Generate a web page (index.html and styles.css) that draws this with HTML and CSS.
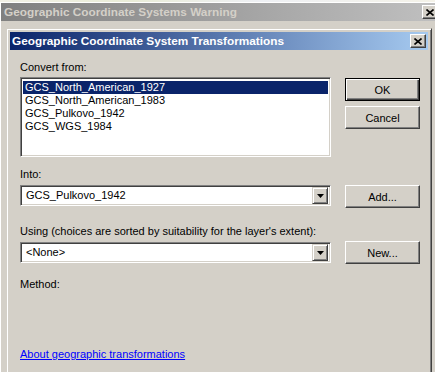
FILE: index.html
```html
<!DOCTYPE html>
<html lang="en">
<head>
    <meta charset="UTF-8">
    <title>Geographic Coordinate System Transformations</title>
    <link rel="stylesheet" href="styles.css">
</head>
<body>
    <div class="desk-strip"></div>

    <!-- Parent window (inactive) -->
    <div class="window">
        <div class="caption caption-inactive">
            <span class="caption-text">Geographic Coordinate Systems Warning</span>
            <button class="close-btn" type="button">
                <svg width="8" height="7" viewBox="0 0 8 7"><path d="M0.5 0.5 L7.5 6.5 M7.5 0.5 L0.5 6.5" stroke="#000" stroke-width="1.6" fill="none"/></svg>
            </button>
        </div>

        <div class="window-body">
            <!-- Transformations dialog -->
            <div class="dialog">
                <div class="caption caption-active">
                    <span class="caption-text">Geographic Coordinate System Transformations</span>
                    <button class="close-btn" type="button">
                        <svg width="8" height="7" viewBox="0 0 8 7"><path d="M0.5 0.5 L7.5 6.5 M7.5 0.5 L0.5 6.5" stroke="#000" stroke-width="1.6" fill="none"/></svg>
                    </button>
                </div>

                <div class="dialog-body">
                    <div class="row">
                        <div class="field">
                            <label class="field-label">Convert from:</label>
                            <div class="listbox">
                                <div class="list-item selected">GCS_North_American_1927</div>
                                <div class="list-item">GCS_North_American_1983</div>
                                <div class="list-item">GCS_Pulkovo_1942</div>
                                <div class="list-item">GCS_WGS_1984</div>
                            </div>
                        </div>
                        <div class="button-col first-col">
                            <button class="btn btn-default" type="button">OK</button>
                            <button class="btn" type="button">Cancel</button>
                        </div>
                    </div>

                    <div class="row row-into">
                        <div class="field">
                            <label class="field-label">Into:</label>
                            <div class="combo">
                                <span class="combo-value">GCS_Pulkovo_1942</span>
                                <span class="combo-arrow">
                                    <svg width="7" height="4" viewBox="0 0 7 4"><polygon points="0,0 7,0 3.5,4" fill="#000"/></svg>
                                </span>
                            </div>
                        </div>
                        <div class="button-col combo-col">
                            <button class="btn" type="button">Add...</button>
                        </div>
                    </div>

                    <div class="row row-using">
                        <div class="field">
                            <label class="field-label">Using (choices are sorted by suitability for the layer's extent):</label>
                            <div class="combo">
                                <span class="combo-value">&lt;None&gt;</span>
                                <span class="combo-arrow">
                                    <svg width="7" height="4" viewBox="0 0 7 4"><polygon points="0,0 7,0 3.5,4" fill="#000"/></svg>
                                </span>
                            </div>
                        </div>
                        <div class="button-col combo-col">
                            <button class="btn" type="button">New...</button>
                        </div>
                    </div>

                    <div class="method-label">Method:</div>

                    <a href="#" class="help-link">About geographic transformations</a>
                </div>
            </div>
        </div>
    </div>
</body>
</html>
```

FILE: styles.css
```css
:root {
    --face: #d4d0c8;
    --shadow: #808080;
    --dark: #404040;
    --highlight: #ffffff;
    --select: #0a246a;
}

* {
    box-sizing: border-box;
    margin: 0;
    padding: 0;
}

body {
    width: 435px;
    height: 372px;
    overflow: hidden;
    background: var(--face);
    font-family: "Liberation Sans", Arial, sans-serif;
    font-size: 11px;
    line-height: 13px;
    color: #000;
}

.desk-strip {
    height: 2px;
    background: linear-gradient(90deg, #f2f1e6, #e9ecd8 30%, #eef0f4 60%, #f4f2e8);
}

.window {
    width: 440px;
    border-top: 1px solid var(--highlight);
    border-left: 1px solid var(--highlight);
}

/* Title bars */
.caption {
    height: 18px;
    display: flex;
    align-items: center;
    justify-content: space-between;
    padding: 0 2px;
}

.caption-inactive {
    background: linear-gradient(90deg, #808080, #c0c0c0);
}

.caption-active {
    background: linear-gradient(90deg, #0a246a, #a6caf0);
}

.caption-text {
    font-weight: bold;
    font-size: 11.8px;
    white-space: nowrap;
}

.caption-inactive .caption-text {
    color: var(--face);
    padding-left: 1px;
}

.caption-active .caption-text {
    color: #fff;
}

.close-btn {
    width: 16px;
    height: 14px;
    background: var(--face);
    border: 1px solid;
    border-color: var(--highlight) var(--dark) var(--dark) var(--highlight);
    box-shadow: inset -1px -1px var(--shadow), inset 1px 1px var(--face);
    display: flex;
    align-items: center;
    justify-content: center;
}

.window-body {
    padding: 7px 0 0 5px;
}

/* Dialog frame */
.dialog {
    width: 426px;
    height: 360px;
    background: var(--face);
    border: 1px solid;
    border-color: var(--face) var(--dark) var(--dark) var(--face);
    padding: 3px;
    box-shadow: inset 1px 1px var(--highlight), inset -1px -1px var(--shadow);
}

.dialog-body {
    padding: 11px 0 0 10px;
}

.row {
    display: flex;
    align-items: flex-start;
    gap: 14px;
}

.field {
    width: 311px;
}

.field-label {
    display: block;
    white-space: nowrap;
    margin-bottom: 3px;
}

.button-col {
    width: 75px;
    display: flex;
    flex-direction: column;
    gap: 5px;
}

.first-col {
    margin-top: 17px;
}

.combo-col {
    margin-top: 17px;
}

.row-into {
    margin-top: 11px;
}

.row-into .field-label,
.row-using .field-label {
    margin-bottom: 4px;
}

.row-using {
    margin-top: 17px;
}

.row-using .combo-col {
    margin-top: 16px;
}

/* Sunken controls */
.listbox,
.combo {
    background: #fff;
    border: 1px solid;
    border-color: var(--shadow) var(--highlight) var(--highlight) var(--shadow);
    box-shadow: inset 1px 1px var(--dark), inset -1px -1px var(--face);
}

.listbox {
    height: 80px;
    padding: 3px 2px 2px 2px;
}

.list-item {
    height: 13px;
    padding-left: 2px;
    white-space: nowrap;
}

.list-item.selected {
    background: var(--select);
    color: #fff;
}

.combo {
    height: 21px;
    display: flex;
    align-items: center;
    justify-content: space-between;
    padding: 2px;
}

.combo-value {
    padding-left: 3px;
}

.combo-arrow {
    width: 16px;
    height: 17px;
    background: var(--face);
    border: 1px solid;
    border-color: var(--face) var(--dark) var(--dark) var(--face);
    box-shadow: inset 1px 1px var(--highlight), inset -1px -1px var(--shadow);
    display: flex;
    align-items: center;
    justify-content: center;
}

/* Push buttons */
.btn {
    height: 23px;
    width: 75px;
    background: var(--face);
    font-family: inherit;
    font-size: 11px;
    color: #000;
    border: 1px solid;
    border-color: var(--highlight) var(--dark) var(--dark) var(--highlight);
    box-shadow: inset -1px -1px var(--shadow), inset 1px 1px var(--face);
}

.btn-default {
    border: 1px solid #000;
    box-shadow: inset 1px 1px var(--highlight), inset -1px -1px var(--dark), inset -2px -2px var(--shadow);
}

.method-label {
    margin-top: 14px;
}

.help-link {
    display: inline-block;
    margin-top: 57px;
    color: #0000ff;
    text-decoration: underline;
}
```
